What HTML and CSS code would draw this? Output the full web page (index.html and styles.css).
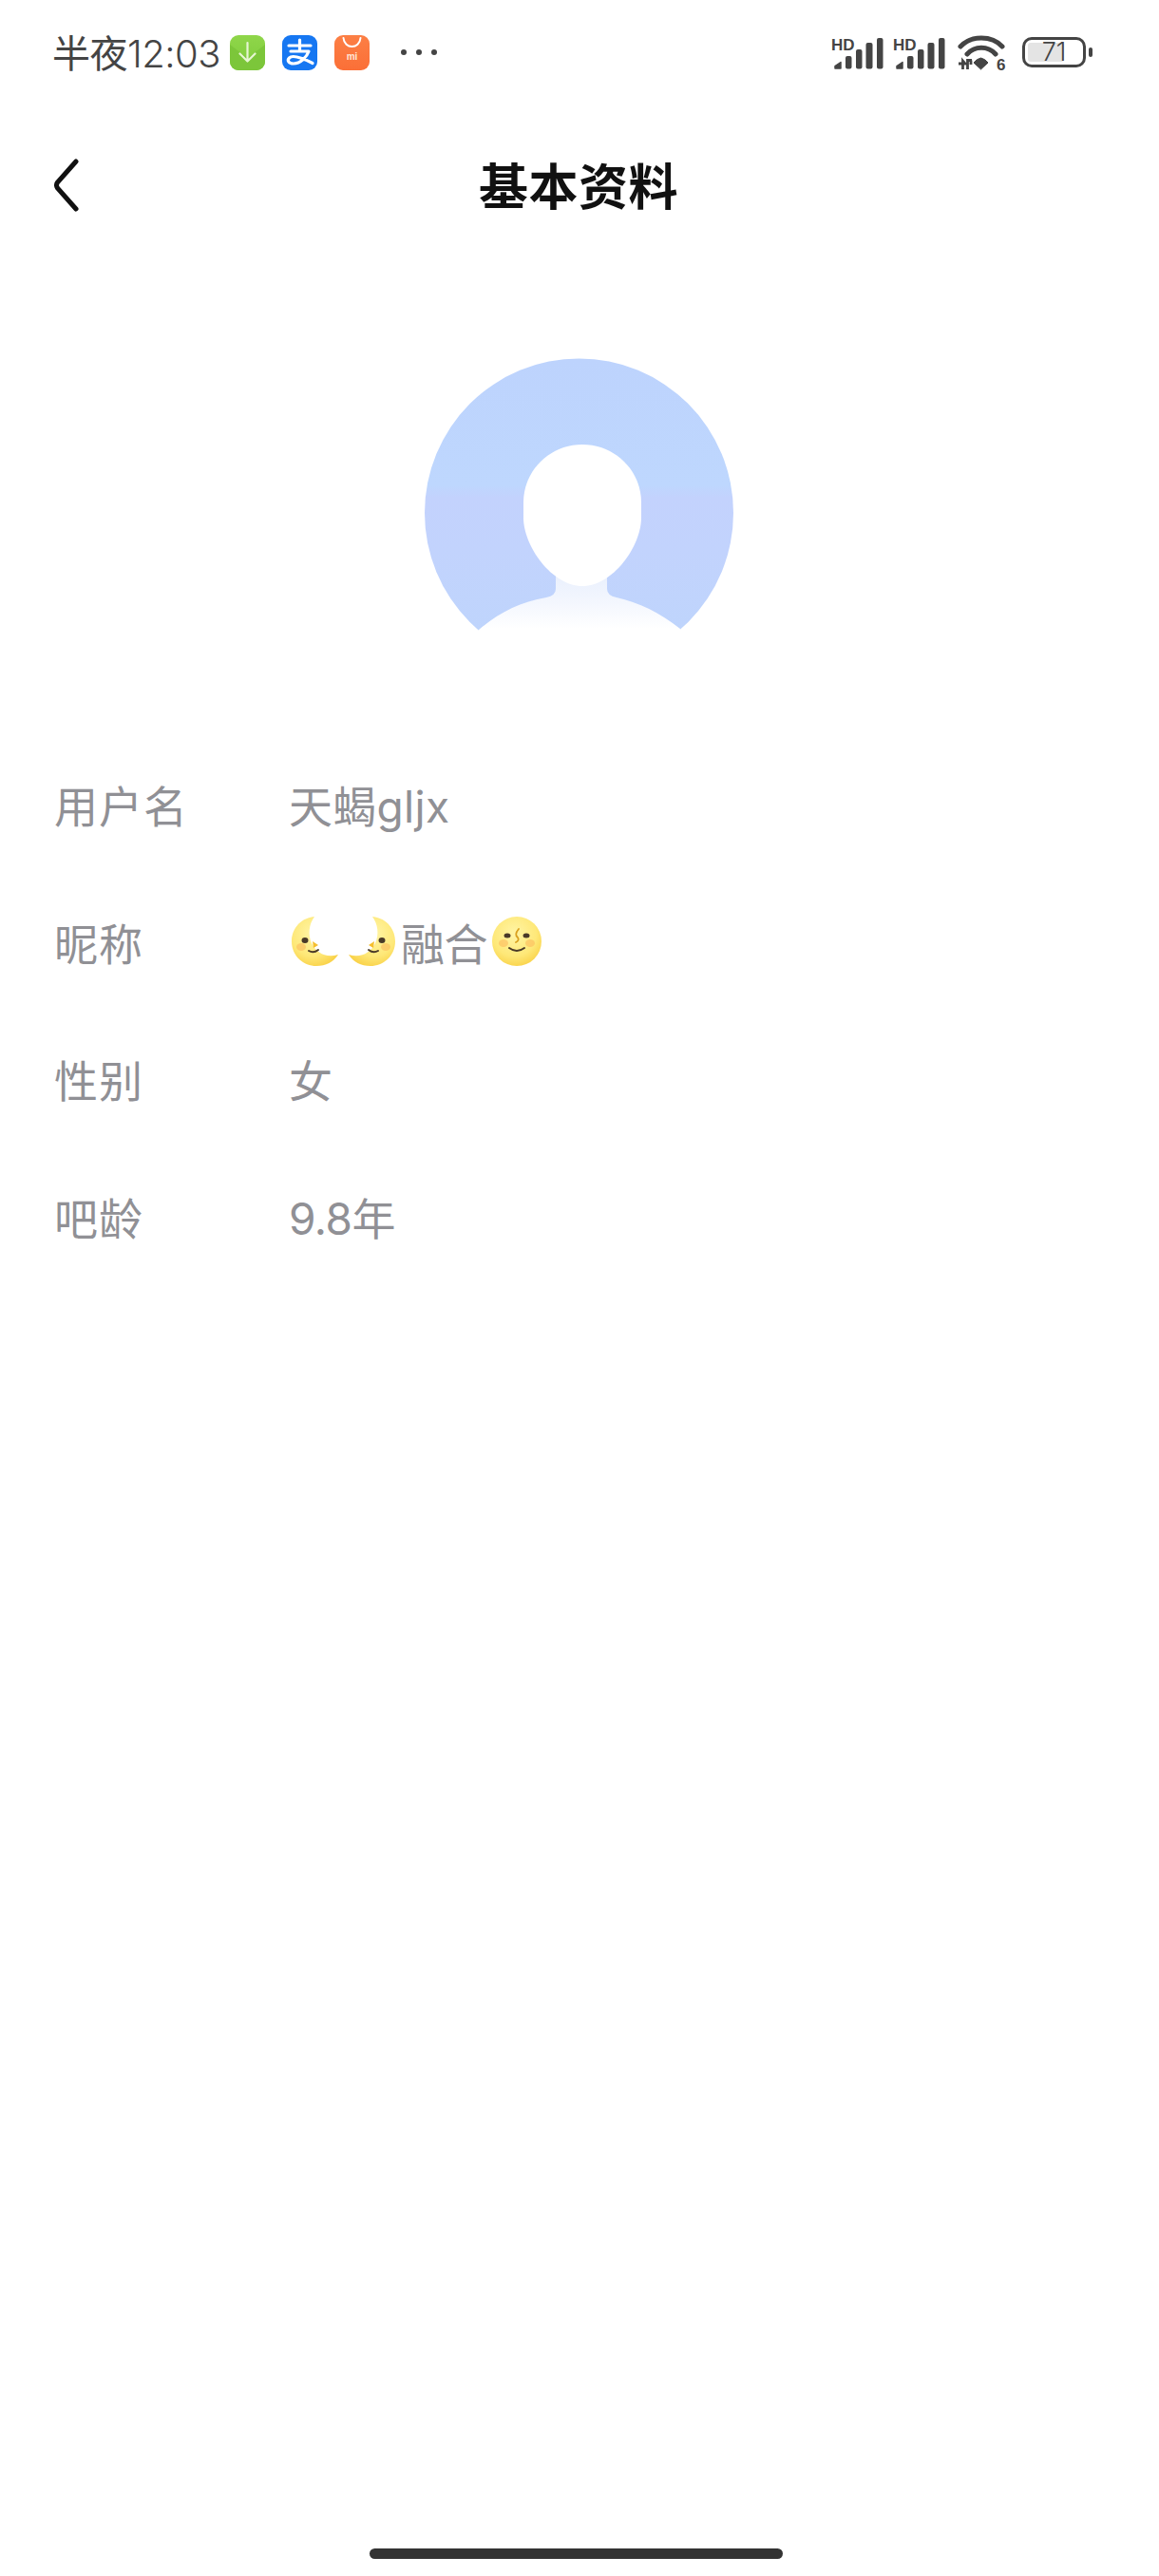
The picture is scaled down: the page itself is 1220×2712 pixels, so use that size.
FILE: index.html
```html
<!DOCTYPE html>
<html lang="zh-CN">
<head>
    <meta charset="UTF-8">
    <meta name="viewport" content="width=device-width, initial-scale=1.0">
    <title>基本资料</title>
    <link rel="stylesheet" href="styles.css">
</head>
<body>
    <div class="page">
        <!-- Status bar -->
        <div class="status-bar">
            <div class="status-left">
                <span class="clock"><span class="clock-prefix">半夜</span>12:03</span>
                <svg class="app-icon" viewBox="0 0 37 37">
                    <defs>
                        <linearGradient id="greenBg" x1="0" y1="0" x2="0" y2="1">
                            <stop offset="0" stop-color="#8fd64a"/>
                            <stop offset="1" stop-color="#7ecb3a"/>
                        </linearGradient>
                    </defs>
                    <rect width="37" height="37" rx="9" fill="url(#greenBg)"/>
                    <path d="M0 10 L18.5 24 L37 10 V28 a9 9 0 0 1 -9 9 H9 a9 9 0 0 1 -9 -9 Z" fill="#7cc63a"/>
                    <path d="M18.5 8 V27 M10.5 19.5 L18.5 27.5 L26.5 19.5" fill="none" stroke="#e6f6d2" stroke-width="2.2" stroke-linecap="round" stroke-linejoin="round"/>
                </svg>
                <svg class="app-icon" viewBox="0 0 37 37">
                    <rect width="37" height="37" rx="9" fill="#1677f2"/>
                    <path d="M7 11 H30 M18.5 5 V17 M9 17 H28 C26 23 19 30 12 30 C6.5 30 5 26.5 7.5 24 C11 20.5 20 23.5 32 29.5" fill="none" stroke="#fff" stroke-width="3.2" stroke-linecap="round" stroke-linejoin="round"/>
                </svg>
                <svg class="app-icon" viewBox="0 0 37 37">
                    <defs>
                        <linearGradient id="orangeBg" x1="0" y1="0" x2="0" y2="1">
                            <stop offset="0" stop-color="#fc7f45"/>
                            <stop offset="1" stop-color="#fb6f37"/>
                        </linearGradient>
                    </defs>
                    <rect width="37" height="37" rx="9" fill="url(#orangeBg)"/>
                    <path d="M9.5 3 C10.5 15 26.5 15 27.5 3" fill="none" stroke="#fff" stroke-width="2" stroke-linecap="round"/>
                    <text x="18.5" y="26" class="mi-text">mi</text>
                </svg>
                <div class="more-dots"><i></i><i></i><i></i></div>
            </div>
            <div class="status-right">
                <svg class="signal" viewBox="0 -6 56 40">
                    <text x="0" y="12.5" class="hd-text">HD</text>
                    <path d="M4 32 V29.5 L10 25.5 V32 Z" fill="#444" stroke="#444" stroke-width="1.5" stroke-linejoin="round"/>
                    <rect x="15" y="19" width="6.5" height="13.5" rx="2" fill="#444"/>
                    <rect x="26" y="12" width="6.5" height="20.5" rx="2" fill="#444"/>
                    <rect x="36.5" y="5" width="7" height="27.5" rx="2" fill="#444"/>
                    <rect x="48" y="0" width="6.5" height="32.5" rx="2" fill="#444"/>
                </svg>
                <svg class="signal signal-two" viewBox="0 -6 56 40">
                    <text x="0" y="12.5" class="hd-text">HD</text>
                    <path d="M4 32 V29.5 L10 25.5 V32 Z" fill="#444" stroke="#444" stroke-width="1.5" stroke-linejoin="round"/>
                    <rect x="15" y="19" width="6.5" height="13.5" rx="2" fill="#444"/>
                    <rect x="26" y="12" width="6.5" height="20.5" rx="2" fill="#444"/>
                    <rect x="36.5" y="5" width="7" height="27.5" rx="2" fill="#444"/>
                    <rect x="48" y="0" width="6.5" height="32.5" rx="2" fill="#444"/>
                </svg>
                <svg class="wifi" viewBox="0 0 52 44">
                    <path d="M3 12 C14 0 36 0 47 12" fill="none" stroke="#444" stroke-width="5" stroke-linecap="round"/>
                    <path d="M10 20 C18 11 32 11 40 20" fill="none" stroke="#444" stroke-width="5" stroke-linecap="round"/>
                    <path d="M24.5 24 Q29 25 32 29 L24.5 36 L17 29 Q20 25 24.5 24 Z" fill="#444" stroke="#444" stroke-linejoin="round"/>
                    <path d="M1 30 H8 L5.5 27 V36 M10.5 36 V26.5 H15 M14 26.5 V31" fill="none" stroke="#444" stroke-width="2.8"/>
                    <text x="41" y="36.5" class="wifi-six">6</text>
                </svg>
                <div class="battery">
                    <div class="battery-body">
                        <div class="battery-fill"></div>
                        <span class="battery-num">71</span>
                    </div>
                    <div class="battery-nub"></div>
                </div>
            </div>
        </div>

        <!-- Title bar -->
        <div class="nav-bar">
            <svg class="back-icon" viewBox="0 0 26 56">
                <path d="M23 3 L3.5 25 Q1.5 28 3.5 31 L23 53" fill="none" stroke="#111" stroke-width="5" stroke-linecap="round"/>
            </svg>
            <h1 class="nav-title">基本资料</h1>
        </div>

        <!-- Avatar -->
        <div class="avatar-wrap">
            <svg class="avatar" viewBox="0 0 325 326">
                <defs>
                    <linearGradient id="avatarBg" x1="0" y1="0" x2="0" y2="1">
                        <stop offset="0" stop-color="#bdd3fd"/>
                        <stop offset="0.41" stop-color="#bed7fe"/>
                        <stop offset="0.45" stop-color="#c3d2fd"/>
                        <stop offset="0.62" stop-color="#c2d3fd"/>
                        <stop offset="1" stop-color="#bdd5fc"/>
                    </linearGradient>
                    <linearGradient id="bodyFade" x1="0" y1="225" x2="0" y2="285" gradientUnits="userSpaceOnUse">
                        <stop offset="0" stop-color="#e8effd"/>
                        <stop offset="0.55" stop-color="#f4f7fe"/>
                        <stop offset="1" stop-color="#ffffff"/>
                    </linearGradient>
                </defs>
                <circle cx="162.5" cy="163" r="162.5" fill="url(#avatarBg)"/>
                <path d="M138 225 V243 Q138 250 128 252 C100 257 78 268 57 286 V326 H269 V285 C248 268 225 257 202 252 Q192 250 192 243 V225 Z" fill="url(#bodyFade)"/>
                <path d="M166 91 C200 91 228 118 228 152 V168 C228 198 198 240 166 240 C134 240 104 198 104 168 V152 C104 118 132 91 166 91 Z" fill="#fff"/>
            </svg>
        </div>

        <!-- Info rows -->
        <div class="info-list">
            <div class="info-row">
                <span class="info-label">用户名</span>
                <span class="info-value username">天蝎gljx</span>
            </div>
            <div class="info-row">
                <span class="info-label">昵称</span>
                <span class="info-value nickname">
                    <svg class="moon" viewBox="0 0 50 52">
                        <defs>
                            <radialGradient id="moonFill" cx="0.45" cy="0.35" r="0.75">
                                <stop offset="0" stop-color="#fff5a6"/>
                                <stop offset="0.6" stop-color="#fee878"/>
                                <stop offset="1" stop-color="#f8cc3c"/>
                            </radialGradient>
                        </defs>
                        <path d="M24 0 C7 2 0 15 0 26 C0 42 13 52 26 52 C36 52 44 48 49 40 C36 44 26 38 21 28 C17 19 18 8 24 0 Z" fill="url(#moonFill)"/>
                        <ellipse cx="14" cy="25" rx="3.5" ry="3" fill="#4a3a28"/>
                        <path d="M22 26 L28 30 L23 33" fill="#f5bf2e"/>
                        <path d="M18 36 Q23 39 28 35" fill="none" stroke="#4a3a28" stroke-width="2" stroke-linecap="round"/>
                        <ellipse cx="10" cy="32" rx="5" ry="4" fill="#fbb75a" opacity="0.55"/>
                    </svg>
                    <svg class="moon moon-flip" viewBox="0 0 50 52">
                        <path d="M24 0 C7 2 0 15 0 26 C0 42 13 52 26 52 C36 52 44 48 49 40 C36 44 26 38 21 28 C17 19 18 8 24 0 Z" fill="url(#moonFill)"/>
                        <ellipse cx="14" cy="25" rx="3.5" ry="3" fill="#4a3a28"/>
                        <path d="M22 26 L28 30 L23 33" fill="#f5bf2e"/>
                        <path d="M18 36 Q23 39 28 35" fill="none" stroke="#4a3a28" stroke-width="2" stroke-linecap="round"/>
                        <ellipse cx="10" cy="32" rx="5" ry="4" fill="#fbb75a" opacity="0.55"/>
                    </svg>
                    <span class="nick-text">融合</span>
                    <svg class="moon-full" viewBox="0 0 52 52">
                        <circle cx="26" cy="26" r="26" fill="url(#moonFill)"/>
                        <ellipse cx="16" cy="20" rx="3.5" ry="2.5" fill="#4a3a28"/>
                        <ellipse cx="36" cy="20" rx="3.5" ry="2.5" fill="#4a3a28"/>
                        <path d="M28 13 Q23 19 27 22 Q29 25 25 27" fill="none" stroke="#d9a01f" stroke-width="1.8" stroke-linecap="round"/>
                        <path d="M18 33 Q26 39 34 33" fill="none" stroke="#4a3a28" stroke-width="2" stroke-linecap="round"/>
                        <ellipse cx="12" cy="28" rx="5" ry="4" fill="#fbb75a" opacity="0.55"/>
                        <ellipse cx="40" cy="28" rx="5" ry="4" fill="#fbb75a" opacity="0.55"/>
                    </svg>
                </span>
            </div>
            <div class="info-row">
                <span class="info-label">性别</span>
                <span class="info-value">女</span>
            </div>
            <div class="info-row">
                <span class="info-label">吧龄</span>
                <span class="info-value">9.8年</span>
            </div>
        </div>

        <div class="home-bar"></div>
    </div>
</body>
</html>
```

FILE: styles.css
```css
/* General Styling */
body {
    margin: 0;
    background-color: #ffffff;
    font-family: Inter, "Noto Sans CJK SC", sans-serif;
    color: #444;
}

.page {
    display: flex;
    flex-direction: column;
    height: 2712px;
    overflow: hidden;
}

/* Status Bar */
.status-bar {
    display: flex;
    justify-content: space-between;
    height: 110px;
    padding: 37px 70px 0 55px;
    box-sizing: border-box;
}

.status-left {
    display: flex;
    align-items: center;
    height: 36px;
}

.clock {
    width: 187px;
    font-size: 40px;
    font-weight: 300;
    line-height: 36px;
    letter-spacing: -0.5px;
    color: #444;
}

.clock-prefix {
    font-family: "Noto Sans CJK SC", sans-serif;
    font-weight: 400;
}

.app-icon {
    width: 37px;
    height: 37px;
    margin-right: 18px;
}

.mi-text {
    font-family: "Liberation Sans", sans-serif;
    font-size: 10px;
    font-weight: 700;
    text-anchor: middle;
    fill: #ffe6d8;
}

.more-dots {
    display: flex;
    gap: 10px;
    margin-left: 15px;
}

.more-dots i {
    width: 6px;
    height: 6px;
    border-radius: 50%;
    background-color: #444;
}

.status-right {
    display: flex;
    align-items: flex-start;
}

.signal {
    width: 56px;
    height: 40px;
    margin-top: -3px;
    margin-right: 9px;
}

.signal-two {
    margin-right: 12px;
}

.hd-text {
    font-family: "Liberation Sans", sans-serif;
    font-size: 17px;
    font-weight: 700;
    fill: #444;
}

.wifi {
    width: 52px;
    height: 44px;
    margin-right: 16px;
}

.wifi-six {
    font-family: "Liberation Sans", sans-serif;
    font-size: 17px;
    font-weight: 700;
    fill: #444;
}

.battery {
    display: flex;
    align-items: center;
    gap: 3px;
    margin-top: 2px;
}

.battery-body {
    position: relative;
    width: 67px;
    height: 32px;
    padding: 3px;
    box-sizing: border-box;
    border: 3.5px solid #444;
    border-radius: 10px;
}

.battery-fill {
    width: 38px;
    height: 100%;
    background-color: #e4e4e4;
    border-radius: 3px;
}

.battery-num {
    position: absolute;
    inset: 0;
    text-align: center;
    font-size: 27px;
    font-weight: 300;
    line-height: 25px;
    color: #444;
}

.battery-nub {
    width: 4px;
    height: 10px;
    border-radius: 2px;
    background-color: #444;
}

/* Title Bar */
.nav-bar {
    position: relative;
    display: flex;
    align-items: center;
    justify-content: center;
    height: 170px;
}

.back-icon {
    position: absolute;
    left: 57px;
    top: 57px;
    width: 26px;
    height: 56px;
}

.nav-title {
    margin: 0 0 3px -2px;
    font-family: "Noto Sans CJK SC", sans-serif;
    font-size: 52px;
    font-weight: 700;
    line-height: 60px;
    letter-spacing: 0.5px;
    color: #111;
}

/* Avatar */
.avatar-wrap {
    display: flex;
    justify-content: center;
    padding-top: 97px;
    padding-right: 1px;
}

.avatar {
    width: 325px;
    height: 326px;
    display: block;
}

/* Info Rows */
.info-list {
    margin-top: 71px;
    padding-left: 57px;
}

.info-row {
    display: grid;
    grid-template-columns: 247px 1fr;
    align-items: center;
    height: 144.5px;
    font-size: 46px;
    color: #909095;
}

.info-label {
    font-family: "Noto Sans CJK SC", sans-serif;
    font-weight: 400;
    letter-spacing: 1px;
}

.info-value {
    font-weight: 400;
    letter-spacing: -0.5px;
}

.username {
    letter-spacing: 0.3px;
}

.nickname {
    display: flex;
    align-items: center;
    margin-left: 3px;
}

.moon {
    width: 50px;
    height: 52px;
    margin-right: 9px;
}

.moon-flip {
    transform: scaleX(-1);
    margin-right: 6px;
}

.nick-text {
    margin-right: 5px;
}

.moon-full {
    width: 52px;
    height: 52px;
}

/* Home Indicator */
.home-bar {
    width: 435px;
    height: 11px;
    margin: auto 0 18px 389px;
    border-radius: 6px;
    background-color: #333;
}
```
